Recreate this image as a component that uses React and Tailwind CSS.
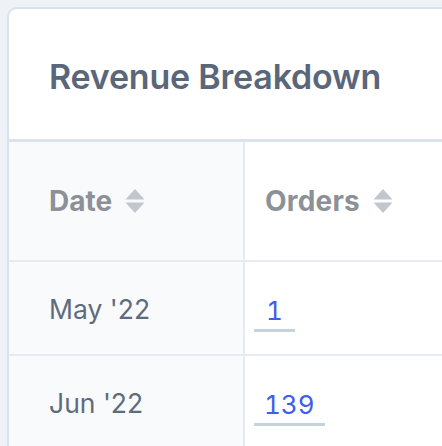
import { useState } from "react";

function SortIcon() {
  return (
    <svg width="20" height="26" viewBox="0 0 20 26" className="ml-[13px] shrink-0">
      <path d="M10 1 L19.5 11.5 L0.5 11.5 Z" fill="#c2c6ce" />
      <path d="M0.5 14.5 L19.5 14.5 L10 25 Z" fill="#c2c6ce" />
    </svg>
  );
}

const rows = [
  { date: "May '22", orders: 1 },
  { date: "Jun '22", orders: 139 },
];

export default function App() {
  const [sortKey, setSortKey] = useState(null);

  return (
    <div
      className="w-[442px] h-[446px] overflow-hidden bg-[#eef2f6] pt-[7px] pl-[7px]"
      style={{ fontFamily: "Inter, 'Noto Sans', sans-serif" }}
    >
      <div className="w-[640px] bg-white border-2 border-[#d9e3ec] rounded-tl-[10px]">
        <div className="h-[133px] flex items-center pl-[40px] border-b-[3px] border-[#dbe4ed]">
          <h1 className="text-[34px] font-semibold text-[#5a6679] tracking-[-0.2px] translate-y-[2px]">
            Revenue Breakdown
          </h1>
        </div>

        <div className="grid grid-cols-[236px_1fr]">
          <div
            className="h-[118px] flex items-center pl-[40px] bg-[#f8fafc] border-r-2 border-[#e6ebf2] cursor-pointer"
            onClick={() => setSortKey("date")}
          >
            <span className="text-[28px] font-bold text-[#8c9097]">Date</span>
            <SortIcon />
          </div>
          <div
            className="h-[118px] flex items-center pl-[20px] cursor-pointer"
            onClick={() => setSortKey("orders")}
          >
            <span className="text-[28px] font-bold text-[#8c9097] tracking-[0.2px]">Orders</span>
            <SortIcon />
          </div>

          {rows.map((r) => (
            <div key={r.date} className="contents">
              <div className="h-[94px] flex items-center pl-[40px] bg-[#f8fafc] border-r-2 border-t-2 border-[#e6ebf2]">
                <span className="text-[26.5px] text-[#5f6b7d] translate-y-[2px]">{r.date}</span>
              </div>
              <div className="h-[94px] flex items-center pl-[9px] border-t-2 border-[#e6ebf2]">
                <a
                  href="#"
                  className={
                    "inline-block pt-[4px] pb-[1px] text-[26px] leading-[34px] tabular-nums text-[#3d5ee8] border-b-[3px] border-[#c4d4df] translate-y-[3px] " +
                    (r.orders < 10 ? "px-[12px]" : "px-[10px]")
                  }
                >
                  {r.orders}
                </a>
              </div>
            </div>
          ))}
        </div>
      </div>
    </div>
  );
}
